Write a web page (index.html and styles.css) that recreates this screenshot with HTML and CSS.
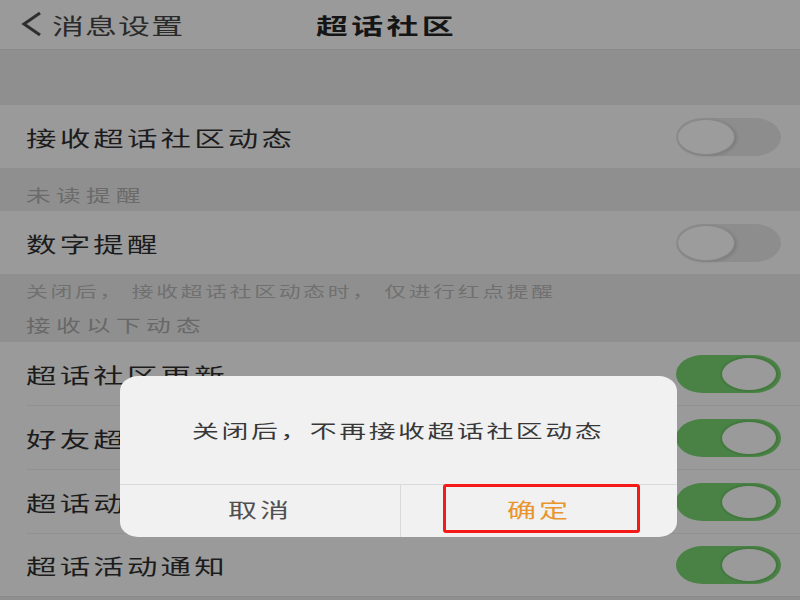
FILE: index.html
```html
<!DOCTYPE html>
<html lang="zh-CN">
<head>
    <meta charset="UTF-8">
    <meta name="viewport" content="width=device-width, initial-scale=1.0">
    <title>超话社区</title>
    <link rel="stylesheet" href="styles.css">
</head>
<body>
    <div class="page">
        <!-- barra superior -->
        <div class="nav">
            <svg class="back" width="22" height="24" viewBox="0 0 22 24">
                <polyline points="19,1 3,12 19,23" fill="none" stroke="#2e2e2e" stroke-width="3"/>
            </svg>
            <span class="nav-back wide">消息设置</span>
            <span class="nav-title wide">超话社区</span>
        </div>
        <div class="gap"></div>

        <div class="row">
            <span class="row-text wide">接收超话社区动态</span>
            <div class="switch"><div class="knob"></div></div>
        </div>
        <div class="label"><span class="wide">未读提醒</span></div>
        <div class="row">
            <span class="row-text wide">数字提醒</span>
            <div class="switch"><div class="knob"></div></div>
        </div>
        <div class="note">
            <div class="note-line"><span class="wide">关闭后， 接收超话社区动态时， 仅进行红点提醒</span></div>
            <div class="note-line sub"><span class="wide">接收以下动态</span></div>
        </div>

        <div class="list">
            <div class="row">
                <span class="row-text wide">超话社区更新</span>
                <div class="switch on"><div class="knob"></div></div>
            </div>
            <!-- el dialogo tapa el resto de estos textos -->
            <div class="row">
                <span class="row-text wide">好友超</span>
                <div class="switch on"><div class="knob"></div></div>
            </div>
            <div class="row">
                <span class="row-text wide">超话动</span>
                <div class="switch on"><div class="knob"></div></div>
            </div>
            <div class="row">
                <span class="row-text wide">超话活动通知</span>
                <div class="switch on"><div class="knob"></div></div>
            </div>
        </div>
        <div class="bottom"></div>

        <!-- dialogo de confirmacion -->
        <div class="dialog">
            <div class="dialog-msg"><span class="wide mid">关闭后，不再接收超话社区动态</span></div>
            <div class="dialog-btns">
                <div class="btn cancel"><span class="wide mid">取消</span></div>
                <div class="btn ok"><span class="wide mid">确定</span></div>
            </div>
            <div class="mark"></div>
        </div>
    </div>
</body>
</html>
```

FILE: styles.css
```css
body {
    margin: 0;
    padding: 0;
    background-color: #8f8f8f;
    font-family: "Noto Sans CJK SC", "Noto Sans", sans-serif;
}

.page {
    position: relative;
    width: 800px;
    height: 600px;
    overflow: hidden;
    display: flex;
    flex-direction: column;
}

/* texto ensanchado como en la captura */
.wide {
    display: inline-block;
    white-space: nowrap;
    transform: scaleX(1.45);
    transform-origin: 0 50%;
}
.wide.mid {
    transform-origin: 50% 50%;
}

.nav {
    height: 50px;
    flex-shrink: 0;
    background-color: #9a9a9a;
    border-bottom: 1px solid #8b8b8b;
    display: flex;
    align-items: center;
    padding-left: 21px;
    padding-bottom: 2px;
    box-sizing: border-box;
}
.back {
    margin-right: 9px;
}
.nav-back {
    font-size: 22px;
    letter-spacing: 0.8px;
    color: #2a2a2a;
}
.nav-title {
    margin-left: 173px;
    font-size: 22px;
    font-weight: 700;
    letter-spacing: 2.3px;
    color: #151515;
}

.gap {
    height: 55px;
    flex-shrink: 0;
    background-color: #8f8f8f;
}

.row {
    height: 63px;
    flex-shrink: 0;
    background-color: #9a9a9a;
    display: flex;
    align-items: center;
    justify-content: space-between;
    padding: 0 19px 0 26px;
    box-sizing: border-box;
}
.row-text {
    font-size: 21px;
    letter-spacing: 2.2px;
    color: #1c1c1c;
}

.label {
    height: 43px;
    flex-shrink: 0;
    box-sizing: border-box;
    padding: 10px 0 0 26px;
    line-height: 33px;
    font-size: 17px;
    letter-spacing: 3.7px;
    color: #6b6b6b;
}

.note {
    height: 68px;
    flex-shrink: 0;
    padding-left: 26px;
}
.note-line {
    height: 34px;
    line-height: 34px;
    font-size: 15px;
    letter-spacing: 1.9px;
    color: #707070;
}
.note-line.sub {
    font-size: 17px;
    letter-spacing: 3.7px;
    color: #686868;
}

.list {
    background-color: #9a9a9a;
    padding-left: 26px;
    flex-shrink: 0;
    border-bottom: 1px solid #8a8a8a;
}
.list .row {
    height: 64px;
    padding-left: 0;
    border-bottom: 1px solid #919191;
}
.list .row:last-child {
    height: 62px;
    border-bottom: none;
}

.bottom {
    flex: 1;
    background-color: #8f8f8f;
}

/* interruptores */
.switch {
    width: 105px;
    height: 38px;
    border-radius: 27px / 19px;
    background-color: #8d8d8d;
    display: flex;
    align-items: center;
    padding: 0 1px;
    box-sizing: border-box;
}
.knob {
    width: 58px;
    height: 36px;
    border-radius: 50%;
    background-color: #9c9c9c;
    border: 1px solid #878787;
    box-sizing: border-box;
    box-shadow: 2px 1px 3px rgba(0, 0, 0, 0.12);
}
.switch.on {
    background-color: #4a8246;
    justify-content: flex-end;
    padding: 0 3px;
}
.switch.on .knob {
    background-color: #9a9a9a;
    border: 2px solid #43793f;
    box-shadow: none;
}

/* dialogo */
.dialog {
    position: absolute;
    left: 120px;
    top: 376px;
    width: 557px;
    height: 161px;
    background-color: #f1f1f1;
    border-radius: 18px / 15px;
    display: flex;
    flex-direction: column;
}
.dialog-msg {
    height: 108px;
    display: flex;
    align-items: center;
    justify-content: center;
    font-size: 18.5px;
    letter-spacing: 1.8px;
    color: #383838;
}
.dialog-btns {
    flex: 1;
    display: flex;
    border-top: 1px solid #dadada;
}
.btn {
    display: flex;
    align-items: center;
    justify-content: center;
    font-size: 20px;
    letter-spacing: 2px;
    padding-bottom: 4px;
}
.btn.cancel {
    width: 280px;
    border-right: 1px solid #dadada;
    color: #505050;
}
.btn.ok {
    flex: 1;
    color: #e8952f;
}
.mark {
    position: absolute;
    left: 323px;
    top: 108px;
    width: 197px;
    height: 49px;
    border: 3px solid #f31a17;
    border-radius: 3px;
    box-sizing: border-box;
}
```
